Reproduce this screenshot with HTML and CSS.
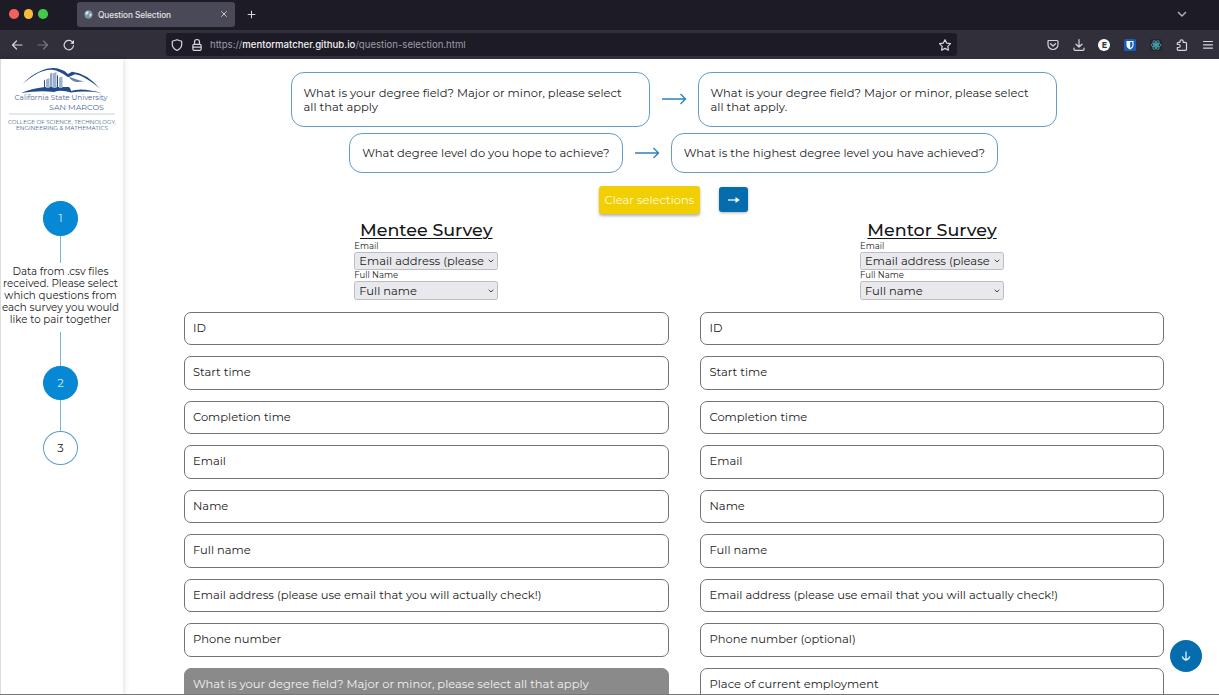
FILE: index.html
```
<!DOCTYPE html>
<html lang="en">
<head>
<meta charset="utf-8">
<title>Question Selection</title>
<link rel="stylesheet" href="styles.css">
</head>
<body>
<div class="window">
  <header class="tabbar">
    <div class="lights"><i class="light red"></i><i class="light amber"></i><i class="light green"></i></div>
    <div class="tab">
      <svg class="globe" viewBox="0 0 10 10"><circle cx="5" cy="5" r="4.600" fill="#7896aa"/><path d="M1.500 3Q4 .5 5 2T4 4.500 2.500 6.500zM6 4.500q2-1 2.500 0T6.500 8z" fill="#dce6ea"/></svg>
      <span class="tab-title">Question Selection</span>
      <svg class="close" viewBox="0 0 8 8"><path d="M1.300 1.300l5.400 5.400M6.700 1.300L1.300 6.700"/></svg>
    </div>
    <svg class="plus" viewBox="0 0 10 10"><path d="M5 .8v8.400M.8 5h8.400"/></svg>
    <svg class="chev" viewBox="0 0 10 6"><path d="M1 1l4 4 4-4"/></svg>
  </header>
  <nav class="toolbar">
    <div class="navicons">
      <svg class="ico" viewBox="0 0 14 14"><path d="M12 7H2.500M6.500 3L2.500 7l4 4"/></svg>
      <svg class="ico dim" viewBox="0 0 14 14"><path d="M2 7h9.500M7.500 3l4 4-4 4"/></svg>
      <svg class="ico" viewBox="0 0 14 14"><path d="M11.500 7.500A4.700 4.700 0 1 1 10 3.600l1.300 1.200"/><path d="M12 2v3.700H8.300z" fill="#e6e6ea" stroke="none"/></svg>
    </div>
    <div class="urlbar">
      <svg class="ico" viewBox="0 0 14 14"><path d="M7 1.700l4.700 1.600v3.200c0 2.700-2.200 4.700-4.700 6-2.500-1.300-4.700-3.300-4.700-6V3.300z"/></svg>
      <svg class="ico" viewBox="0 0 14 14"><rect x="2.900" y="6.300" width="8.200" height="6" rx="1"/><path d="M4.500 6V4a2.500 2.500 0 0 1 5 0v2M3 9.200h8"/></svg>
      <span class="url">https://<b>mentormatcher.github.io</b>/question-selection.html</span>
      <svg class="ico star" viewBox="0 0 14 14"><path d="M7 1.700l1.700 3.400 3.800.6-2.700 2.700.6 3.800L7 10.400l-3.400 1.800.6-3.800-2.700-2.700 3.800-.6z"/></svg>
    </div>
    <div class="extensions">
      <svg class="ico" viewBox="0 0 14 14"><path d="M3 2.500h8c.7 0 1 .4 1 1V6.500a5 5 0 0 1-10 0V3.500c0-.6.300-1 1-1zM4.500 5.700L7 8l2.500-2.300"/></svg>
      <svg class="ico" viewBox="0 0 14 14"><path d="M7 1.500V9M4 6.200L7 9l3-2.800M2 10v1.300c0 .7.400 1 1 1h8c.6 0 1-.3 1-1V10"/></svg>
      <span class="badge-e">E</span>
      <svg class="ico" viewBox="0 0 14 14"><rect x="1" y="1" width="12" height="12" rx="1.500" fill="#175dbc" stroke="none"/><path d="M3.500 3h7v4.200c0 2.200-2 3.500-3.500 4.200-1.500-.7-3.500-2-3.500-4.200z" fill="#fff" stroke="none"/><path d="M7.200 4.100h2.200v3.100c0 1.300-1.100 2.200-2.200 2.900z" fill="#175dbc" stroke="none"/></svg>
      <svg class="ico react" viewBox="0 0 14 14"><rect x="1" y="1" width="12" height="12" rx="1.500" fill="#25272f" stroke="none"/><ellipse cx="7" cy="7" rx="4.800" ry="2"/><ellipse cx="7" cy="7" rx="4.800" ry="2" transform="rotate(60 7 7)"/><ellipse cx="7" cy="7" rx="4.800" ry="2" transform="rotate(120 7 7)"/><circle cx="7" cy="7" r="1.300" fill="#439ca9"/></svg>
      <svg class="ico" viewBox="0 0 14 14"><path d="M5 4.300V3.400a1.600 1.600 0 0 1 3.200 0v.9h2.300c.6 0 1 .4 1 1v6c0 .6-.4 1-1 1H3.300c-.6 0-1-.4-1-1V9.500h1.400a1.500 1.500 0 0 0 0-3H2.300V5.300c0-.6.400-1 1-1z"/></svg>
      <svg class="ico" viewBox="0 0 14 14"><path d="M2.500 3.500h9M2.500 6.800h9M2.500 10.100h9"/></svg>
    </div>
  </nav>
  <div class="page">
    <aside class="sidebar">
      <svg class="logo" viewBox="0 0 123 80">
        <g fill="#214c87">
          <path d="M22.500 25C36 11 50 7.500 58 9.500q6 1.500 10 5.500l4-2.300q14 1 28 17-16-13.500-25-14.500l-7 3q-8-6.500-16-7.500-12-1-29.500 14.300z"/>
          <path d="M21 34q10-4.500 24-6l24 0q2 2 2 4 10-4 31 2-17-2.500-31-.5-10-3-17-.5-14-2-33 1z"/>
          <path d="M46 29V20.500l3.500-1.500v10zM52.500 29V14.500l4-1.500v16zM59 29V18.500l3.500-1v11.500z" fill="#9db1ce"/>
          <path d="M50.500 29V14.500l1-.8V29zM57 29V16l1 .8V29zM44 28.500v-7l1-1v8z"/>
          <path d="M69 17.500q5 2.700 15 5l-8 .5q-6-2-7-5.500z" opacity=".7"/>
        </g>
        <g class="logo-name"><text x="14.500" y="41.300" textLength="93" lengthAdjust="spacingAndGlyphs">California State University</text>
        <text x="49" y="50.500" textLength="55" lengthAdjust="spacingAndGlyphs">SAN MARCOS</text></g>
        <path d="M9 55h106" stroke="#b7c4d6" stroke-width=".8"/>
        <g class="logo-college"><text x="8" y="64.500" textLength="108" lengthAdjust="spacingAndGlyphs">COLLEGE OF SCIENCE, TECHNOLOGY,</text>
        <text x="16" y="71.300" textLength="92" lengthAdjust="spacingAndGlyphs">ENGINEERING &amp; MATHEMATICS</text></g>
      </svg>
      <div class="steps">
        <div class="step done">1</div>
        <div class="line first"></div>
        <p class="note">Data from .csv files<br>received. Please select<br>which questions from<br>each survey you would<br>like to pair together</p>
        <div class="line second"></div>
        <div class="step done">2</div>
        <div class="line third"></div>
        <div class="step">3</div>
      </div>
    </aside>
    <main class="main">
      <section class="pair tall">
        <div class="bubble">What is your degree field? Major or minor, please select<br>all that apply</div>
        <svg class="arrow" viewBox="0 0 26 12"><path d="M1 6h24M19.500 1l5 5-5 5"/></svg>
        <div class="bubble">What is your degree field? Major or minor, please select<br>all that apply.</div>
      </section>
      <section class="pair short">
        <div class="bubble hope">What degree level do you hope to achieve?</div>
        <svg class="arrow" viewBox="0 0 26 12"><path d="M1 6h24M19.500 1l5 5-5 5"/></svg>
        <div class="bubble highest">What is the highest degree level you have achieved?</div>
      </section>
      <div class="actions">
        <button class="clear">Clear selections</button>
        <button class="next"><svg viewBox="0 0 12 8"><path d="M0 4h8"/><path d="M7.500 1L11.800 4 7.500 7z" fill="#fff" stroke="none"/></svg></button>
      </div>
      <div class="surveys">
        <section class="survey">
          <h2>Mentee Survey</h2>
          <div class="fields">
            <span class="label">Email</span>
            <div class="select"><span>Email address (please</span><svg viewBox="0 0 6 4"><path d="M.7.700L3 3 5.300.7"/></svg></div>
            <span class="label">Full Name</span>
            <div class="select"><span>Full name</span><svg viewBox="0 0 6 4"><path d="M.7.700L3 3 5.300.7"/></svg></div>
          </div>
          <ul class="questions">
            <li>ID</li><li>Start time</li><li>Completion time</li><li>Email</li><li>Name</li><li>Full name</li>
            <li>Email address (please use email that you will actually check!)</li><li>Phone number</li>
            <li class="picked">What is your degree field? Major or minor, please select all that apply</li>
          </ul>
        </section>
        <section class="survey">
          <h2>Mentor Survey</h2>
          <div class="fields">
            <span class="label">Email</span>
            <div class="select"><span>Email address (please</span><svg viewBox="0 0 6 4"><path d="M.7.700L3 3 5.300.7"/></svg></div>
            <span class="label">Full Name</span>
            <div class="select"><span>Full name</span><svg viewBox="0 0 6 4"><path d="M.7.700L3 3 5.300.7"/></svg></div>
          </div>
          <ul class="questions">
            <li>ID</li><li>Start time</li><li>Completion time</li><li>Email</li><li>Name</li><li>Full name</li>
            <li>Email address (please use email that you will actually check!)</li><li>Phone number (optional)</li>
            <li>Place of current employment</li>
          </ul>
        </section>
      </div>
    </main>
    <button class="scroll"><svg viewBox="0 0 10 10"><path d="M5 .5v8.500M1.300 5.300Q2 8.500 5 9q3-.5 3.700-3.700"/></svg></button>
  </div>
</div>
</body>
</html>
```
FILE: styles.css
```
* { box-sizing: border-box; }
body { margin: 0; background: #fff; font-family: Montserrat, Inter, sans-serif; color: #222; }
button { border: 0; padding: 0; font: inherit; }
svg { display: block; fill: none; flex: none; }
.window { height: 695px; display: flex; flex-direction: column; overflow: hidden; border-bottom: 1px solid #777; }
.tabbar { height: 30px; flex: none; background: #1d1c26; display: flex; align-items: center; padding: 0 32px 2px 9px; }
.lights { display: flex; gap: 5px; width: 68px; }
.light { width: 9.500px; height: 9.500px; border-radius: 50%; }
.red { background: #f4605a; }
.amber { background: #f8bd38; }
.green { background: #42c84b; }
.tab { width: 158px; height: 25px; border-radius: 3px; background: #4a4957; display: flex; align-items: center; padding: 0 7px; color: #e4e4e8; font: 500 8.300px Inter, sans-serif; }
.globe { width: 9px; height: 9px; margin-right: 5px; }
.tab-title { flex: 1; padding-top: 1px; letter-spacing: -.1px; white-space: nowrap; }
.close { width: 8px; height: 8px; stroke: #c4c4cb; }
.plus { width: 9px; height: 9px; stroke: #d4d4da; margin-left: 12px; stroke-width: 1.200; }
.chev { width: 10px; height: 6px; stroke: #b4b4bc; stroke-width: 1.400; margin-left: auto; }
.toolbar { height: 29px; flex: none; background: #302f3a; display: flex; align-items: center; padding: 0 4px 0 10px; }
.ico { width: 14px; height: 14px; stroke: #d6d6dc; stroke-width: 1.200; stroke-linecap: round; stroke-linejoin: round; }
.dim { stroke: #777681; }
.navicons { display: flex; gap: 12px; width: 156px; }
.urlbar { width: 791px; height: 23px; border-radius: 3px; background: #1d1c26; display: flex; align-items: center; gap: 6px; padding: 0 5px 0 4px; }
.url { font: 9.600px Inter, sans-serif; color: #9c9ca6; white-space: nowrap; }
.url b { font-weight: 500; color: #f1f1f4; }
.star { margin-left: auto; }
.extensions { display: flex; gap: 11.900px; margin-left: auto; align-items: center; }
.badge-e { width: 12px; height: 12px; margin: 0 1px; border-radius: 50%; background: #fff; color: #333; font-size: 8px; font-weight: 700; line-height: 12px; text-align: center; }
.react { stroke: #439ca9; stroke-width: .9; }
.page { flex: 1; min-height: 0; position: relative; display: flex; }
.sidebar { width: 123px; flex: none; border-left: 1px solid #ddd; box-shadow: 1px 0 6px rgba(0,0,0,.13); }
.logo { width: 123px; height: 80px; margin-left: -1px; }
.logo-name { fill: #486794; font: 8px Montserrat, Inter, sans-serif; }
.logo-college { fill: #3b5c89; font: 5.400px Montserrat, Inter, sans-serif; }
.steps { display: flex; flex-direction: column; align-items: center; margin-top: 62px; padding-right: 3px; }
.step { width: 35px; height: 34.500px; border-radius: 50%; border: 1px solid #5d9bc9; display: flex; align-items: center; justify-content: center; font-size: 11.500px; }
.done { background: #0788d5; border-color: #0788d5; color: #cce9fa; }
.line { width: 1px; background: #79b2db; }
.first { height: 27.500px; }
.second { height: 33.500px; margin-top: 5.500px; }
.third { height: 30.500px; }
.note { margin: 0; padding-top: 2.500px; font-size: 10.300px; line-height: 12.200px; text-align: center; white-space: nowrap; }
.main { flex: 1; min-width: 0; margin-left: 5px; padding-top: 12.500px; }
.pair { display: flex; justify-content: center; align-items: center; gap: 11px; }
.tall { height: 55px; margin-bottom: 6.500px; }
.short { height: 40px; }
.bubble { height: 100%; border: 1px solid #659cc7; border-radius: 13px; padding: 0 12px; display: flex; flex-direction: column; justify-content: center; font-size: 11.500px; line-height: 14.200px; white-space: nowrap; }
.tall .bubble { display: block; width: 359px; padding-top: 13px; }
.hope { width: 273.500px; }
.highest { width: 327px; }
.arrow { width: 26px; height: 12px; stroke: #2f83bd; stroke-width: 1.400; }
.actions { display: flex; justify-content: center; align-items: center; gap: 19px; height: 29px; margin-top: 12px; }
.clear { width: 101px; height: 28px; background: #f2cf05; color: #fffbdc; border-radius: 3px; box-shadow: 0 2px 3px rgba(0,0,0,.3); font-size: 11.500px; white-space: nowrap; }
.next { width: 29px; height: 25px; background: #056cae; border-radius: 3px; display: grid; place-items: center; box-shadow: 0 1px 3px rgba(0,0,0,.3); }
.next svg { width: 12px; height: 8px; stroke: #fff; stroke-width: 1.200; }
.surveys { display: grid; grid-template-columns: 485.500px 464px; gap: 31px; margin: 4.500px 0 0 55.500px; }
.survey { display: flex; flex-direction: column; align-items: center; }
h2 { margin: 0; height: 22px; font-size: 17.500px; line-height: 21px; font-weight: 500; color: #151515; text-decoration: underline; text-decoration-thickness: 1px; text-underline-offset: 2px; white-space: nowrap; }
.fields { width: 144px; display: flex; flex-direction: column; margin-bottom: 11.500px; }
.label { height: 11px; font-size: 8.500px; line-height: 11px; }
.select { height: 18.800px; border: 1px solid #bdbcc5; border-radius: 2.500px; background: #e9e9ed; display: flex; align-items: center; justify-content: space-between; padding: 0 3px 0 4px; font-size: 11.500px; white-space: nowrap; }
.select svg { width: 6px; height: 4px; stroke: #444; }
.questions { list-style: none; align-self: stretch; margin: 0; padding: 0; display: flex; flex-direction: column; gap: 11px; }
.questions li { height: 33.500px; flex: none; border: 1px solid #737373; border-radius: 7px; padding: 0 8.500px; line-height: 31.500px; font-size: 11.500px; white-space: nowrap; }
.questions .picked { background: #8a8a8a; border-color: #8a8a8a; color: #f2f2f2; }
.scroll { position: absolute; right: 17px; bottom: 22.500px; width: 32px; height: 32px; border-radius: 50%; background: #056cae; display: grid; place-items: center; }
.scroll svg { width: 10px; height: 10px; stroke: #e4f1fa; stroke-width: 1.300; }
```
